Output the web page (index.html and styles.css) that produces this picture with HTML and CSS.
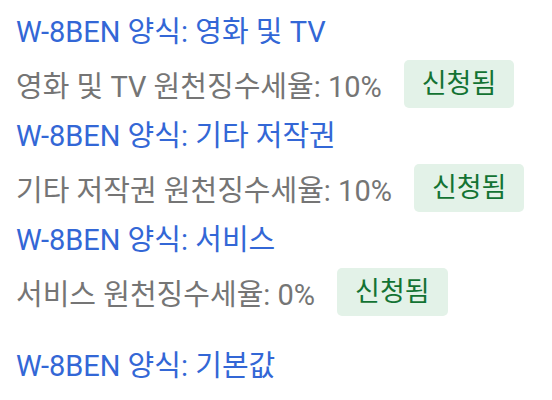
FILE: index.html
```html
<!DOCTYPE html>
<html lang="ko">
<head>
    <meta charset="UTF-8">
    <meta name="viewport" content="width=device-width, initial-scale=1.0">
    <title>원천징수 양식</title>
    <link rel="stylesheet" href="styles.css">
</head>
<body>
    <div class="tax-list">
        <div class="tax-item">
            <div class="form-title">W-8BEN 양식: 영화 및 TV</div>
            <div class="rate-row">
                <span class="rate-text">영화 및 TV 원천징수세율: 10%</span>
                <span class="badge">신청됨</span>
            </div>
        </div>
        <div class="tax-item">
            <div class="form-title">W-8BEN 양식: 기타 저작권</div>
            <div class="rate-row">
                <span class="rate-text">기타 저작권 원천징수세율: 10%</span>
                <span class="badge">신청됨</span>
            </div>
        </div>
        <div class="tax-item">
            <div class="form-title">W-8BEN 양식: 서비스</div>
            <div class="rate-row">
                <span class="rate-text">서비스 원천징수세율: 0%</span>
                <span class="badge">신청됨</span>
            </div>
        </div>
        <div class="tax-item tax-default">
            <div class="form-title">W-8BEN 양식: 기본값</div>
        </div>
    </div>
</body>
</html>
```

FILE: styles.css
```css
body {
    font-family: Roboto, 'Noto Sans CJK KR', sans-serif;
    background-color: #fff;
    margin: 0;
    padding: 4px 16px 0 16px;
}
.form-title {
    color: #3367d6;
    font-size: 29px;
    line-height: 56px;
}
.rate-row {
    display: flex;
    align-items: center;
    gap: 22px;
    height: 48px;
}
.rate-text {
    color: #757575;
    font-size: 29px;
}
.badge {
    background-color: #e3f2e8;
    color: #137333;
    font-size: 27px;
    line-height: 48px;
    padding: 0 18px;
    border-radius: 5px;
}
.tax-default {
    margin-top: 22px;
}
```
